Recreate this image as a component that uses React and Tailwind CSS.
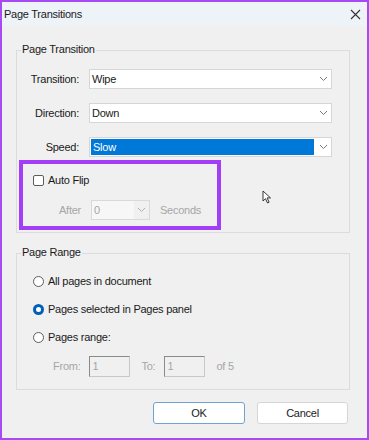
import React from "react";

// chevron used by all dropdowns
function Chevron({ className }) {
  return (
    <svg width="9" height="6" viewBox="0 0 9 6" className={className}>
      <path d="M1 1l3.5 3.5L8 1" fill="none" stroke="currentColor" strokeWidth="1" />
    </svg>
  );
}

function Select({ value, selected }) {
  return (
    <div className="flex h-[20px] w-[243px] items-stretch border border-[#d6d6d6] bg-white">
      <div
        className={
          "flex flex-1 items-center pl-[2px] " +
          (selected ? "m-[1px] bg-[#0078d7] text-white" : "text-[#1a1a1a]")
        }
      >
        {value}
      </div>
      <div className="flex w-[16px] items-center justify-center text-[#7a7a7a]">
        <Chevron />
      </div>
    </div>
  );
}

function Row({ label, children }) {
  return (
    <div className="flex items-center">
      <span className="w-[62px] text-right text-[#1a1a1a]">{label}</span>
      <div className="ml-[10px]">{children}</div>
    </div>
  );
}

function Radio({ checked, label }) {
  return (
    <div className="flex h-[16px] items-center">
      {checked ? (
        <span className="flex h-[11px] w-[11px] items-center justify-center rounded-full bg-[#005fb8]">
          <span className="h-[5px] w-[5px] rounded-full bg-white" />
        </span>
      ) : (
        <span className="h-[11px] w-[11px] rounded-full border border-[#5c5c5c] bg-white" />
      )}
      <span className="ml-[4px] text-[#1a1a1a]">{label}</span>
    </div>
  );
}

export default function App() {
  return (
    <div
      className="relative h-[440px] w-[369px] overflow-hidden border-2 border-[#a64bf4] bg-[#f0f0f0] text-[11px] leading-none tracking-[-0.25px]"
      style={{ fontFamily: '"Liberation Sans", Arial, sans-serif' }}
    >
      {/* title bar */}
      <div className="flex h-[24px] items-center justify-between bg-[#eef3f8] pl-[2px] pr-[6px]">
        <span className="text-[#1a1a1a]">Page Transitions</span>
        <svg width="11" height="11" viewBox="0 0 11 11">
          <path d="M1 1l9 9M10 1l-9 9" stroke="#333" strokeWidth="1.1" />
        </svg>
      </div>

      {/* Page Transition group */}
      <div className="relative ml-[14px] mt-[24px] h-[183px] w-[334px] border border-[#dcdcdc]">
        <span className="absolute -top-[7px] left-[4px] bg-[#f0f0f0] px-[1px] text-[#1a1a1a]">
          Page Transition
        </span>
        <div className="flex flex-col gap-[14px] pt-[18px]">
          <Row label="Transition:">
            <Select value="Wipe" />
          </Row>
          <Row label="Direction:">
            <Select value="Down" />
          </Row>
          <Row label="Speed:">
            <Select value="Slow" selected />
          </Row>
        </div>

        <div className="ml-[2px] mt-[3px] h-[70px] w-[202px] border-[4px] border-[#a23ff6] pl-[10px] pt-[11px]">
          <div className="flex items-center">
            <span className="h-[11px] w-[11px] rounded-[2px] border border-[#5c5c5c] bg-white" />
            <span className="ml-[4px] text-[#1a1a1a]">Auto Flip</span>
          </div>
          <div className="mt-[14px] flex items-center pl-[26px] text-[#a6a6a6]">
            <span>After</span>
            <div className="ml-[10px] flex h-[20px] w-[59px] items-stretch border border-[#d9d9d9]">
              <span className="flex flex-1 items-center bg-[#f7f7f7] pl-[2px]">0</span>
              <span className="flex w-[15px] items-center justify-center text-[#b0b0b0]">
                <Chevron />
              </span>
            </div>
            <span className="ml-[10px]">Seconds</span>
          </div>
        </div>
      </div>

      {/* cursor */}
      <svg className="absolute left-[260px] top-[188px]" width="10" height="14" viewBox="0 0 10 14">
        <path d="M1 1v10l2.5-2.3L5.5 13l1.6-.8-2-4.3H8.5z" fill="#fff" stroke="#222" strokeWidth="0.9" />
      </svg>

      {/* Page Range group */}
      <div className="relative ml-[14px] mt-[20px] h-[137px] w-[334px] border border-[#dcdcdc]">
        <span className="absolute -top-[7px] left-[4px] bg-[#f0f0f0] px-[1px] text-[#1a1a1a]">
          Page Range
        </span>
        <div className="flex flex-col gap-[12px] pl-[16px] pt-[19px]">
          <Radio label="All pages in document" />
          <Radio checked label="Pages selected in Pages panel" />
          <Radio label="Pages range:" />
        </div>
        <div className="mt-[11px] flex items-center pl-[36px] text-[#a6a6a6]">
          <span>From:</span>
          <span className="ml-[9px] h-[21px] w-[41px] border border-[#c8c8c8] border-l-[#8a8a8a] border-t-[#8a8a8a] pl-[2px] pt-[4px]">1</span>
          <span className="ml-[11px]">To:</span>
          <span className="ml-[9px] h-[21px] w-[41px] border border-[#c8c8c8] border-l-[#8a8a8a] border-t-[#8a8a8a] pl-[2px] pt-[4px]">1</span>
          <span className="ml-[11px]">of 5</span>
        </div>
      </div>

      {/* buttons */}
      <div className="mt-[12px] flex justify-end gap-[12px] pr-[19px]">
        <button className="h-[22px] w-[92px] rounded-[3px] border border-[#6fa3d4] bg-white text-[#1a1a1a]">
          OK
        </button>
        <button className="h-[22px] w-[91px] rounded-[3px] border border-[#d6d6d6] bg-white text-[#1a1a1a]">
          Cancel
        </button>
      </div>
    </div>
  );
}
